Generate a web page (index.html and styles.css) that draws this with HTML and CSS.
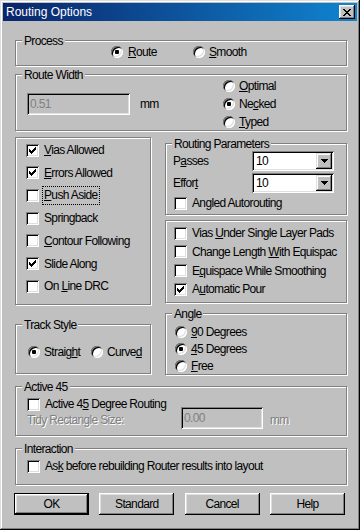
FILE: index.html
```html
<!DOCTYPE html>
<html lang="en">
<head>
    <meta charset="UTF-8">
    <title>Routing Options</title>
    <link rel="stylesheet" href="styles.css">
</head>
<body>
    <div class="window">
        <div class="titlebar">
            <span class="titlebar__text">Routing Options</span>
            <span class="titlebar__close">
                <svg width="8" height="7" viewBox="0 0 8 7" shape-rendering="crispEdges"><path d="M0 0h2v1h-2zM6 0h2v1h-2zM1 1h2v1h-2zM5 1h2v1h-2zM2 2h4v1h-4zM3 3h2v1h-2zM2 4h4v1h-4zM1 5h2v1h-2zM5 5h2v1h-2zM0 6h2v1h-2zM6 6h2v1h-2z"/></svg>
            </span>
        </div>

        <div class="dialog">
            <div class="group group--process">
                <span class="group__label">Process</span>
                <div class="process">
                    <span class="opt opt--route"><span class="radio"><span class="radio__dot"></span></span><span class="opt__text"><u>R</u>oute</span></span>
                    <span class="opt"><span class="radio"></span><span class="opt__text"><u>S</u>mooth</span></span>
                </div>
            </div>

            <div class="group group--width">
                <span class="group__label">Route Width</span>
                <div class="width">
                    <div class="width__value">
                        <span class="edit edit--width">0.51</span>
                        <span class="width__unit">mm</span>
                    </div>
                    <div class="width__modes">
                        <span class="opt opt--mode"><span class="radio"></span><span class="opt__text"><u>O</u>ptimal</span></span>
                        <span class="opt opt--mode"><span class="radio"><span class="radio__dot"></span></span><span class="opt__text">Ne<u>c</u>ked</span></span>
                        <span class="opt opt--mode"><span class="radio"></span><span class="opt__text"><u>T</u>yped</span></span>
                    </div>
                </div>
            </div>

            <div class="middle">
                <div class="column">
                    <div class="group group--checks">
                        <span class="check-row"><span class="check"><svg width="7" height="7" viewBox="0 0 7 7" shape-rendering="crispEdges"><path d="M6 0h1v1h-1zM5 1h2v1h-2zM0 2h1v1h-1zM4 2h3v1h-3zM0 3h2v1h-2zM3 3h3v1h-3zM0 4h5v1h-5zM1 5h3v1h-3zM2 6h1v1h-1z"/></svg></span><span class="opt__text"><u>V</u>ias Allowed</span></span>
                        <span class="check-row"><span class="check"><svg width="7" height="7" viewBox="0 0 7 7" shape-rendering="crispEdges"><path d="M6 0h1v1h-1zM5 1h2v1h-2zM0 2h1v1h-1zM4 2h3v1h-3zM0 3h2v1h-2zM3 3h3v1h-3zM0 4h5v1h-5zM1 5h3v1h-3zM2 6h1v1h-1z"/></svg></span><span class="opt__text"><u>E</u>rrors Allowed</span></span>
                        <span class="check-row"><span class="check"></span><span class="opt__text opt__text--focus"><u>P</u>ush Aside</span></span>
                        <span class="check-row"><span class="check"></span><span class="opt__text">Springback</span></span>
                        <span class="check-row"><span class="check"></span><span class="opt__text"><u>C</u>ontour Following</span></span>
                        <span class="check-row"><span class="check"><svg width="7" height="7" viewBox="0 0 7 7" shape-rendering="crispEdges"><path d="M6 0h1v1h-1zM5 1h2v1h-2zM0 2h1v1h-1zM4 2h3v1h-3zM0 3h2v1h-2zM3 3h3v1h-3zM0 4h5v1h-5zM1 5h3v1h-3zM2 6h1v1h-1z"/></svg></span><span class="opt__text">Slide Along</span></span>
                        <span class="check-row"><span class="check"></span><span class="opt__text">On <u>L</u>ine DRC</span></span>
                    </div>

                    <div class="group group--track">
                        <span class="group__label">Track Style</span>
                        <div class="track">
                            <span class="opt opt--straight"><span class="radio"><span class="radio__dot"></span></span><span class="opt__text">Straig<u>h</u>t</span></span>
                            <span class="opt"><span class="radio"></span><span class="opt__text">Curve<u>d</u></span></span>
                        </div>
                    </div>
                </div>

                <div class="column">
                    <div class="group group--params">
                        <span class="group__label">Routing Parameters</span>
                        <div class="field field--first">
                            <span class="field__name">P<u>a</u>sses</span>
                            <span class="combo">
                                <span class="combo__text">10</span>
                                <span class="combo__button"><svg width="7" height="4" viewBox="0 0 7 4" shape-rendering="crispEdges"><path d="M0 0h7v1h-7zM1 1h5v1h-5zM2 2h3v1h-3zM3 3h1v1h-1z"/></svg></span>
                            </span>
                        </div>
                        <div class="field">
                            <span class="field__name">Effor<u>t</u></span>
                            <span class="combo">
                                <span class="combo__text">10</span>
                                <span class="combo__button"><svg width="7" height="4" viewBox="0 0 7 4" shape-rendering="crispEdges"><path d="M0 0h7v1h-7zM1 1h5v1h-5zM2 2h3v1h-3zM3 3h1v1h-1z"/></svg></span>
                            </span>
                        </div>
                        <span class="check-row check-row--angled"><span class="check"></span><span class="opt__text">Angled Autorouting</span></span>
                    </div>

                    <div class="group group--extras">
                        <span class="check-row check-row--extra"><span class="check"></span><span class="opt__text">Vias <u>U</u>nder Single Layer Pads</span></span>
                        <span class="check-row check-row--extra"><span class="check"></span><span class="opt__text">Change Length <u>W</u>ith Equispac</span></span>
                        <span class="check-row check-row--extra"><span class="check"></span><span class="opt__text">E<u>q</u>uispace While Smoothing</span></span>
                        <span class="check-row check-row--extra"><span class="check"><svg width="7" height="7" viewBox="0 0 7 7" shape-rendering="crispEdges"><path d="M6 0h1v1h-1zM5 1h2v1h-2zM0 2h1v1h-1zM4 2h3v1h-3zM0 3h2v1h-2zM3 3h3v1h-3zM0 4h5v1h-5zM1 5h3v1h-3zM2 6h1v1h-1z"/></svg></span><span class="opt__text">A<u>u</u>tomatic Pour</span></span>
                    </div>

                    <div class="group group--angle">
                        <span class="group__label">Angle</span>
                        <div class="angle">
                            <span class="opt opt--angle"><span class="radio"></span><span class="opt__text"><u>9</u>0 Degrees</span></span>
                            <span class="opt opt--angle"><span class="radio"><span class="radio__dot"></span></span><span class="opt__text"><u>4</u>5 Degrees</span></span>
                            <span class="opt opt--angle"><span class="radio"></span><span class="opt__text"><u>F</u>ree</span></span>
                        </div>
                    </div>
                </div>
            </div>

            <div class="group group--active">
                <span class="group__label">Active 45</span>
                <span class="check-row check-row--single"><span class="check"></span><span class="opt__text">Active 4<u>5</u> Degree Routing</span></span>
                <div class="tidy">
                    <span class="tidy__name disabled">Tidy Rectangle Size:</span>
                    <span class="edit edit--tidy">0.00</span>
                    <span class="tidy__unit disabled">mm</span>
                </div>
            </div>

            <div class="group group--interaction">
                <span class="group__label">Interaction</span>
                <span class="check-row check-row--single"><span class="check"></span><span class="opt__text">As<u>k</u> before rebuilding Router results into layout</span></span>
            </div>

            <div class="buttons">
                <span class="button button--default">OK</span>
                <span class="button">Standard</span>
                <span class="button">Cancel</span>
                <span class="button">Help</span>
            </div>
        </div>
    </div>
</body>
</html>
```

FILE: styles.css
```css
* {
    box-sizing: border-box;
}

body {
    margin: 0;
    background-color: #c0c0c0;
    font-family: "Liberation Sans", Arial, sans-serif;
    font-size: 12px;
    letter-spacing: -0.65px;
    color: #000;
}

u {
    text-decoration-thickness: 1px;
    text-underline-offset: 1px;
}

.window {
    width: 360px;
    height: 530px;
    padding: 3px;
    background-color: #c0c0c0;
    box-shadow: inset -1px -1px #000, inset 1px 1px #dfdfdf, inset -2px -2px #808080, inset 2px 2px #fff;
}

/* title bar */
.titlebar {
    display: flex;
    align-items: center;
    height: 18px;
    padding: 0 2px 0 3px;
    background: linear-gradient(to right, #0a246a, #1084d0);
    color: #fff;
    letter-spacing: 0;
    line-height: 18px;
}

.titlebar__close {
    display: flex;
    align-items: center;
    justify-content: center;
    width: 16px;
    height: 14px;
    margin-left: auto;
    padding-top: 1px;
    background-color: #c0c0c0;
    box-shadow: inset -1px -1px #000, inset 1px 1px #fff, inset -2px -2px #808080, inset 2px 2px #dfdfdf;
}

.dialog {
    padding: 19px 10px 0 12px;
}

/* etched group boxes */
.group {
    border: 1px solid #808080;
    box-shadow: inset 1px 1px #fff, 1px 1px #fff;
}

.group__label {
    display: block;
    width: fit-content;
    height: 13px;
    margin: -6px 0 0 6px;
    padding: 0 2px;
    line-height: 13px;
    background-color: #c0c0c0;
}

/* radios and checkboxes */
.opt,
.check-row {
    display: flex;
    align-items: center;
    white-space: nowrap;
}

.opt__text {
    line-height: 14px;
}

.radio {
    display: flex;
    align-items: center;
    justify-content: center;
    flex: none;
    width: 12px;
    height: 12px;
    margin-right: 4px;
    border-radius: 50%;
    background-color: #fff;
    box-shadow: inset 1px 1px #808080, inset -1px -1px #fff, inset 2px 2px #000, inset -2px -2px #dfdfdf;
}

.radio__dot {
    width: 4px;
    height: 4px;
    border-radius: 1px;
    background-color: #000;
}

.check {
    display: flex;
    align-items: center;
    justify-content: center;
    flex: none;
    width: 13px;
    height: 13px;
    margin-right: 5px;
    background-color: #fff;
    box-shadow: inset 1px 1px #808080, inset -1px -1px #fff, inset 2px 2px #000, inset -2px -2px #dfdfdf;
}

.edit {
    display: block;
    padding-left: 3px;
    color: #808080;
    line-height: 22px;
    height: 22px;
    background-color: #c0c0c0;
    box-shadow: inset 1px 1px #808080, inset -1px -1px #fff, inset 2px 2px #000, inset -2px -2px #dfdfdf;
}

.disabled {
    color: #808080;
    text-shadow: 1px 1px 0 #fff;
}

/* process */
.group--process {
    height: 26px;
}

.process {
    display: flex;
    height: 12px;
    margin-top: -2px;
    padding-left: 95px;
}

.opt--route {
    width: 82px;
}

.opt--route .radio {
    margin-right: 5px;
}

/* route width */
.group--width {
    height: 57px;
    margin-top: 8px;
}

.width {
    display: flex;
    margin-top: -5px;
}

.width__value {
    display: flex;
    align-items: center;
    width: 207px;
}

.edit--width {
    width: 103px;
    margin-left: 11px;
}

.width__unit {
    margin-left: 10px;
}

.opt--mode {
    height: 18px;
}

/* middle columns */
.middle {
    display: grid;
    grid-template-columns: 136px 182px;
    column-gap: 14px;
    align-items: start;
    margin-top: 6px;
}

.column {
    display: flex;
    flex-direction: column;
}

.group--checks {
    height: 168px;
    padding: 1px 0 0 10px;
}

.group--checks .check-row {
    height: 22.67px;
}

.opt__text--focus {
    margin: 0 -1px;
    padding: 1px 1px 2px;
    outline: 1px dotted #000;
}

.group--track {
    height: 50px;
    margin-top: 19px;
}

.track {
    display: flex;
    height: 14px;
    margin-top: 13px;
    padding-left: 12px;
}

.opt--straight {
    width: 63px;
}

.group--params {
    height: 72px;
    margin-top: 6px;
}

.field {
    display: flex;
    align-items: center;
    height: 20px;
    margin-top: 2px;
    padding-left: 7px;
}

.field--first {
    margin-top: 0;
}

.field__name {
    width: 79px;
}

.combo {
    display: flex;
    width: 82px;
    height: 20px;
    padding: 2px;
    background-color: #fff;
    box-shadow: inset 1px 1px #808080, inset -1px -1px #fff, inset 2px 2px #000, inset -2px -2px #dfdfdf;
}

.combo__text {
    flex: 1;
    padding-left: 2px;
    line-height: 16px;
}

.combo__button {
    display: flex;
    align-items: center;
    justify-content: center;
    width: 16px;
    height: 16px;
    background-color: #c0c0c0;
    box-shadow: inset -1px -1px #000, inset 1px 1px #dfdfdf, inset -2px -2px #808080, inset 2px 2px #fff;
}

.check-row--angled {
    height: 14px;
    margin-top: 3px;
    padding-left: 8px;
}

.group--extras {
    height: 83px;
    margin-top: 5px;
    padding: 3px 0 0 8px;
}

.check-row--extra {
    height: 18.67px;
}

.group--angle {
    height: 62px;
    margin-top: 10px;
}

.angle {
    margin-top: 2px;
    padding-left: 9px;
}

.opt--angle {
    height: 17px;
}

/* active 45 */
.group--active {
    height: 50px;
    margin-top: 11px;
}

.check-row--single {
    height: 14px;
    margin-top: 3px;
    padding-left: 11px;
}

.tidy {
    display: flex;
    align-items: center;
    height: 22px;
    margin-top: -4px;
    padding-left: 11px;
}

.tidy__name {
    width: 154px;
    padding-top: 3px;
}

.edit--tidy {
    width: 82px;
}

.tidy__unit {
    margin-left: 7px;
    padding-top: 3px;
}

.group--interaction {
    height: 37px;
    margin-top: 12px;
}

/* buttons */
.buttons {
    display: flex;
    justify-content: space-between;
    width: 331px;
    margin: 8px 0 0 -1px;
}

.button {
    display: flex;
    align-items: center;
    justify-content: center;
    width: 75px;
    height: 22px;
    background-color: #c0c0c0;
    box-shadow: inset -1px -1px #000, inset 1px 1px #fff, inset -2px -2px #808080, inset 2px 2px #dfdfdf;
}

.button--default {
    border: 1px solid #000;
    box-shadow: inset -1px -1px #000, inset 1px 1px #fff, inset -2px -2px #808080, inset 2px 2px #dfdfdf;
}
```
